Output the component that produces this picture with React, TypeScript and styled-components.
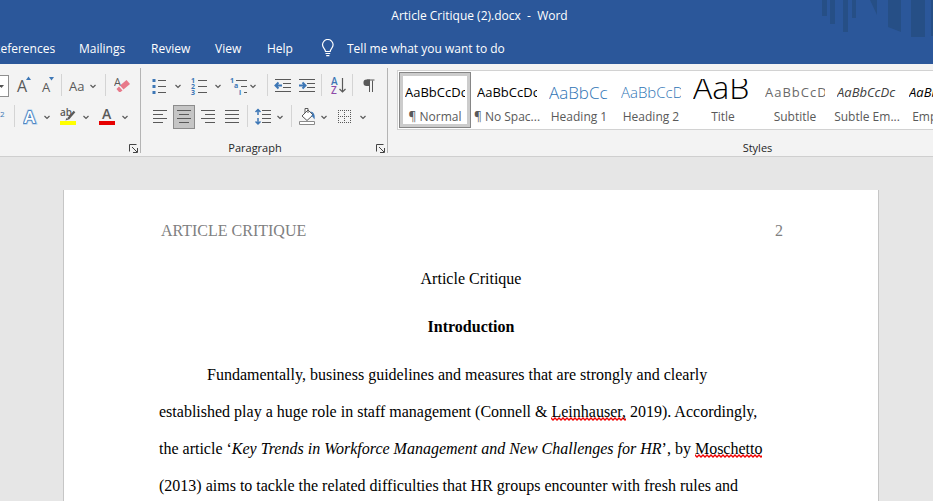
import React from 'react';
import styled, { createGlobalStyle, css } from 'styled-components';

const ui = `"Open Sans", "Noto Sans", sans-serif`;
const word = '#2b579a';
const ink = '#595959';
const blue = '#3d77b6';

const GlobalStyle = createGlobalStyle`
  * { box-sizing: border-box; }
  html, body, #root { height: 100%; }
  body { margin: 0; overflow: hidden; font-family: ${ui}; font-size: 12px; }
  button { font: inherit; color: inherit; background: none; border: 0; padding: 0; margin: 0; }
  svg { display: block; }
`;

const Window = styled.div`
  display: flex;
  flex-direction: column;
  height: 100%;
  min-height: 100vh;
  overflow: hidden;
  background: #e6e6e6;
`;

const Banner = styled.header`
  position: relative;
  flex: none;
  background: ${word};
  color: #fff;
`;

const BannerArt = styled.svg`
  position: absolute;
  top: 0;
  right: 0;
`;

const DocTitle = styled.h1`
  margin: 0;
  padding-left: 26px;
  font-size: 12px;
  font-weight: 400;
  line-height: 32px;
  text-align: center;
  white-space: pre;
`;

const TabRow = styled.nav`
  display: flex;
  height: 32px;
  margin-left: -7px;
`;

const Tab = styled.button<{ $w: number }>`
  flex: none;
  width: ${(p) => p.$w}px;
  text-align: left;
  white-space: nowrap;
`;

const TellMe = styled.label`
  display: flex;
  align-items: center;
  gap: 12px;
`;

const TellMeInput = styled.input`
  width: 200px;
  padding: 0;
  border: 0;
  outline: 0;
  background: transparent;
  color: #fff;
  font: inherit;
  &::placeholder { color: #fff; opacity: 1; }
`;

const Ribbon = styled.div`
  display: flex;
  flex: none;
  height: 93px;
  padding-top: 4px;
  overflow: hidden;
  background: #f3f3f3;
  border-bottom: 1px solid #cfcfcf;
`;

const Group = styled.section<{ $w: number }>`
  display: flex;
  flex-direction: column;
  flex: none;
  width: ${(p) => p.$w}px;
  height: 85px;
  border-right: 1px solid #b4b4b4;
`;

const Tools = styled.div<{ $pad?: number }>`
  display: flex;
  flex-direction: column;
  gap: 7px;
  padding: 6px 0 0 ${(p) => p.$pad ?? 0}px;
`;

const ToolRow = styled.div`
  display: flex;
  height: 24px;
`;

const ToolButton = styled.button<{ $w: number; $on?: boolean }>`
  flex: none;
  width: ${(p) => p.$w}px;
  height: 24px;
  ${(p) => p.$on && css`
    background: #c5c5c5;
    box-shadow: inset 0 0 0 1px #8c8c8c;
  `}
`;

const Divider = styled.span`
  flex: none;
  width: 1px;
  height: 22px;
  background: #d4d4d4;
`;

const Space = styled.span<{ $w: number }>`
  flex: none;
  width: ${(p) => p.$w}px;
`;

const FontSize = styled.select`
  flex: none;
  width: 33px;
  height: 22px;
  margin: 1px 0 0 -24px;
  appearance: none;
  border: 1px solid #8f8f8f;
  border-radius: 0;
  background: #fff url("data:image/svg+xml,%3Csvg xmlns='http://www.w3.org/2000/svg' width='5' height='3'%3E%3Cpath d='M0 0h5L2.5 3z' fill='%23555'/%3E%3C/svg%3E") no-repeat right 4px center;
  font: inherit;
`;

const GroupFoot = styled.div`
  display: grid;
  grid-template-columns: 1fr 18px;
  align-items: center;
  height: 10px;
  margin-top: auto;
  color: #262626;
  font-size: 11px;
`;

const Launcher = styled.button`
  justify-self: end;
  grid-column: 2;
  width: 9px;
  height: 9px;
  margin-right: 2px;
`;

const GroupName = styled.span`
  grid-column: 1;
  line-height: 10px;
  text-align: center;
`;

const Gallery = styled.div`
  display: flex;
  flex: none;
  width: 725px;
  height: 60px;
  margin: 2px 0 0 9px;
  padding: 1px;
  background: #fff;
  border: 1px solid #d2d2d2;
`;

const StyleCard = styled.button<{ $on?: boolean }>`
  display: flex;
  flex-direction: column;
  align-items: center;
  flex: none;
  width: 72px;
  height: 56px;
  padding-top: 7px;
  color: ${ink};
  ${(p) => p.$on && css`
    box-shadow: inset 0 0 0 1px #868686, inset 0 0 0 4px #cccccc;
  `}
`;

const Preview = styled.span<{ $size: number; $color: string; $weight?: number; $italic?: boolean; $track?: number; $line?: number }>`
  display: block;
  width: 60px;
  height: 28px;
  overflow: hidden;
  text-align: left;
  white-space: nowrap;
  line-height: ${(p) => p.$line ?? 27}px;
  font-size: ${(p) => p.$size}px;
  font-weight: ${(p) => p.$weight ?? 400};
  font-style: ${(p) => (p.$italic ? 'italic' : 'normal')};
  letter-spacing: ${(p) => p.$track ?? 0}px;
  color: ${(p) => p.$color};
`;

const StyleName = styled.span`
  line-height: 20px;
  white-space: nowrap;
`;

const Workspace = styled.main`
  display: flex;
  flex: 1;
  justify-content: center;
  min-height: 0;
  padding: 33px 0 0 9px;
  overflow: hidden;
`;

const Page = styled.article`
  flex: 0 1 816px;
  min-height: 1056px;
  padding: 0 95px;
  background: #fff;
  border: solid #c6c6c6;
  border-width: 0 1px 1px;
  color: #000;
  font-family: "Liberation Serif", "Times New Roman", serif;
  font-size: 16px;
`;

const PageHeader = styled.div`
  display: flex;
  justify-content: space-between;
  padding: 32px 0 0 2px;
  line-height: 18px;
  color: #808080;
`;

const Centered = styled.h2<{ $bold?: boolean }>`
  margin: 0;
  font-size: 16px;
  font-weight: ${(p) => (p.$bold ? 700 : 400)};
  line-height: 18px;
  text-align: center;
  padding-top: 30px;
`;

const Body = styled.p`
  margin: 0;
  padding-top: 20px;
  line-height: 37px;
  text-indent: 48px;
  white-space: nowrap;
`;

const Misspelled = styled.span`
  padding-bottom: 1px;
  background: url("data:image/svg+xml,%3Csvg xmlns='http://www.w3.org/2000/svg' width='4' height='4'%3E%3Cpath d='M-1 0L2 3L5 0' fill='none' stroke='%23f00000' stroke-width='1.3'/%3E%3C/svg%3E") repeat-x left bottom;
`;

const Icon = ({ w, children }: { w: number; children: React.ReactNode }) => (
  <svg width={w} height="24" viewBox={`0 0 ${w} 24`} fill="none" stroke={ink} aria-hidden="true" fontFamily="Open Sans, sans-serif">
    {children}
  </svg>
);

const Chevron = ({ label }: { label: string }) => (
  <ToolButton $w={8} aria-label={label}>
    <Icon w={8}><path d="M1.5 11l2.500 2.500L6.500 11" strokeWidth="1.200" /></Icon>
  </ToolButton>
);

const Tool = ({ w, label, on, children }: { w: number; label: string; on?: boolean; children: React.ReactNode }) => (
  <ToolButton $w={w} $on={on} aria-label={label} aria-pressed={on}>
    <Icon w={w}>{children}</Icon>
  </ToolButton>
);

const LaunchIcon = ({ label }: { label: string }) => (
  <Launcher aria-label={label}>
    <svg width="9" height="9" viewBox="0 0 9 9" fill="none" stroke="#444">
      <path d="M.5 7.500v-7h7M3 3l5 5M8.500 4v4.500H4" />
    </svg>
  </Launcher>
);

const styleCards = [
  { name: '¶ Normal', sample: 'AaBbCcDc', size: 13, color: '#000', on: true },
  { name: '¶ No Spac...', sample: 'AaBbCcDc', size: 13, color: '#000' },
  { name: 'Heading 1', sample: 'AaBbCc', size: 17, color: '#2e74b5', weight: 300 },
  { name: 'Heading 2', sample: 'AaBbCcD', size: 15, color: '#2e74b5', weight: 300 },
  { name: 'Title', sample: 'AaB', size: 32, color: '#000', weight: 300, line: 16 },
  { name: 'Subtitle', sample: 'AaBbCcD', size: 13, color: '#6a6a6a', track: 1 },
  { name: 'Subtle Em...', sample: 'AaBbCcDc', size: 13, color: '#404040', italic: true },
  { name: 'Emphasis', sample: 'AaBbCcDc', size: 13, color: '#000', italic: true },
];

const tabs: [string, number][] = [
  ['References', 86],
  ['Mailings', 72],
  ['Review', 64],
  ['View', 52],
  ['Help', 54],
];

export default function App() {
  return (
    <>
      <GlobalStyle />
      <Window>
        <Banner>
          <BannerArt width="112" height="40" viewBox="0 0 112 40" fill="#264f86" aria-hidden="true">
            <path d="M1 0h5v16H1zM9 0h5v24H9zM22 0h5v32h-5zM31 0h4v18h-4zM49 0h7v15zM67 0h13v32l-13-5zM90 0h14v37H90zM110 0h2v36h-2z" />
          </BannerArt>
          <DocTitle>Article Critique (2).docx  -  Word</DocTitle>
          <TabRow aria-label="Ribbon tabs">
            {tabs.map(([name, w]) => <Tab key={name} $w={w}>{name}</Tab>)}
            <TellMe>
              <svg width="14" height="18" viewBox="0 0 14 18" fill="none" stroke="#fff" strokeWidth="1.2" aria-hidden="true">
                <path d="M4.500 12.500C4.500 10 1.500 9 1.500 5.800a5.300 5.300 0 0 1 10.600 0C12.100 9 9.200 10 9.200 12.500zM4.500 14.500h4.700M5.200 16.700h3.200" />
              </svg>
              <TellMeInput aria-label="Tell me what you want to do" placeholder="Tell me what you want to do" />
            </TellMe>
          </TabRow>
        </Banner>

        <Ribbon>
          <Group $w={141} aria-label="Font">
            <Tools>
              <ToolRow>
                <FontSize aria-label="Font size" defaultValue="12"><option>12</option></FontSize>
                <Space $w={6} />
                <Tool w={21} label="Increase font size">
                  <text x="2" y="18" fontSize="16" fill={ink} stroke="none">A</text>
                  <path d="M11 6l2.500-3.500L16 6z" fill={blue} stroke="none" />
                </Tool>
                <Space $w={4} />
                <Tool w={20} label="Decrease font size">
                  <text x="2" y="18" fontSize="13" fill={ink} stroke="none">A</text>
                  <path d="M9 3h5l-2.500 3.500z" fill={blue} stroke="none" />
                </Tool>
                <Space $w={1} />
                <Divider />
                <Space $w={6} />
                <Tool w={21} label="Change case">
                  <text x="1" y="17" fontSize="13" fill={ink} stroke="none">Aa</text>
                </Tool>
                <Chevron label="Change case options" />
                <Space $w={8} />
                <Divider />
                <Space $w={8} />
                <Tool w={18} label="Clear all formatting">
                  <text x="0" y="12" fontSize="11" fill={ink} stroke="none">A</text>
                  <path d="M6 11.500L12.500 6l3.500 4-6.500 5.500z" fill="#e8798a" stroke="none" />
                  <path d="M5 12.500l3.500 4-2 1.500H5L2.500 15z" fill="#e8798a" stroke="none" />
                </Tool>
              </ToolRow>
              <ToolRow>
                <Tool w={14} label="Superscript">
                  <text x="0" y="12" fontSize="8" fill={blue} stroke="none">2</text>
                </Tool>
                <Divider />
                <Space $w={8} />
                <Tool w={20} label="Text effects">
                  <text x="1" y="18" fontSize="17" fontWeight="600" fill="#a9cbee" stroke="#a9cbee" strokeWidth="3">A</text>
                  <text x="1" y="18" fontSize="17" fontWeight="600" fill="#fff" stroke={blue} strokeWidth="1.500" paintOrder="stroke">A</text>
                </Tool>
                <Chevron label="Text effects options" />
                <Space $w={8} />
                <Tool w={20} label="Text highlight color">
                  <text x="1" y="11" fontSize="10" fontWeight="600" fill={ink} stroke="none">ab</text>
                  <path d="M9 14L15.500 6.500" strokeWidth="2.200" />
                  <path d="M6.500 15.500l1-2.500 2 1.500z" fill={ink} stroke="none" />
                  <path d="M1 16h16v4H1z" fill="#ff0" stroke="none" />
                </Tool>
                <Space $w={3} />
                <Chevron label="Highlight colors" />
                <Space $w={8} />
                <Tool w={20} label="Font color">
                  <text x="4" y="14" fontSize="14" fontWeight="600" fill={ink} stroke="none">A</text>
                  <path d="M1 16h16v4H1z" fill="#e60000" stroke="none" />
                </Tool>
                <Space $w={3} />
                <Chevron label="Font colors" />
              </ToolRow>
            </Tools>
            <GroupFoot><LaunchIcon label="Font settings" /></GroupFoot>
          </Group>

          <Group $w={247} aria-label="Paragraph">
            <Tools $pad={8}>
              <ToolRow>
                <Space $w={1} />
                <Tool w={24} label="Bullets">
                  <path d="M8 6.500h8M8 12.500h8M8 18.500h8" />
                  <path d="M2.500 6.500h3M2.500 12.500h3M2.500 18.500h3" stroke={blue} strokeWidth="3" />
                </Tool>
                <Chevron label="Bullet library" />
                <Space $w={8} />
                <Tool w={24} label="Numbering">
                  <path d="M8 6.500h9M8 12.500h9M8 18.500h9" />
                  <g fill={blue} stroke="none" fontSize="7" fontWeight="700">
                    <text x="1" y="9">1</text><text x="1" y="15">2</text><text x="1" y="21">3</text>
                  </g>
                </Tool>
                <Chevron label="Numbering library" />
                <Space $w={7} />
                <Tool w={20} label="Multilevel list">
                  <path d="M7 6.500h11M12 12.500h6M15 18.500h3" />
                  <g fill={blue} stroke="none" fontSize="7" fontWeight="700">
                    <text x="1" y="9">1</text><text x="5" y="14">a</text><text x="10" y="21">i</text>
                  </g>
                </Tool>
                <Chevron label="List library" />
                <Space $w={10} />
                <Divider />
                <Space $w={5} />
                <Tool w={22} label="Decrease indent">
                  <path d="M2 5.500h16M10 9.500h8M10 13.500h8M2 17.500h16" />
                  <path d="M9 11.500H3M5.500 8.500l-3 3 3 3" stroke={blue} strokeWidth="2" />
                </Tool>
                <Space $w={2} />
                <Tool w={22} label="Increase indent">
                  <path d="M2 5.500h16M10 9.500h8M10 13.500h8M2 17.500h16" />
                  <path d="M2 11.500h6M5.500 8.500l3 3-3 3" stroke={blue} strokeWidth="2" />
                </Tool>
                <Space $w={2} />
                <Divider />
                <Space $w={8} />
                <Tool w={20} label="Sort">
                  <text x="1" y="11" fontSize="10" fontWeight="600" fill={blue} stroke="none">A</text>
                  <text x="1" y="20" fontSize="10" fontWeight="600" fill="#8e4aa8" stroke="none">Z</text>
                  <path d="M12.500 4v14M9.500 15l3 3 3-3" strokeWidth="1.200" />
                </Tool>
                <Space $w={2} />
                <Divider />
                <Space $w={8} />
                <Tool w={20} label="Show formatting marks">
                  <path d="M11.500 18V6.500M8.500 18V6.500M6 6h7.500" />
                  <path d="M9 5.500H5.500a3 3.200 0 0 0 0 6.500H9z" fill={ink} stroke="none" />
                </Tool>
              </ToolRow>
              <ToolRow>
                <Tool w={24} label="Align left"><path d="M4 5.500h14M4 9.500h10M4 13.500h14M4 17.500h10" /></Tool>
                <Tool w={22} label="Center" on><path d="M4 5.500h14M6 9.500h10M4 13.500h14M6 17.500h10" /></Tool>
                <Tool w={24} label="Align right"><path d="M6 5.500h14M10 9.500h10M6 13.500h14M10 17.500h10" /></Tool>
                <Tool w={24} label="Justify"><path d="M6 5.500h14M6 9.500h14M6 13.500h14M6 17.500h14" /></Tool>
                <Space $w={4} />
                <Divider />
                <Space $w={6} />
                <Tool w={22} label="Line spacing">
                  <path d="M8 5.500h9M8 9.500h9M8 13.500h9M8 17.500h9" />
                  <path d="M4 4.500v5.500M4 13v6M1.500 7L4 4.500 6.500 7M1.500 16.500L4 19l2.500-2.500" stroke={blue} strokeWidth="1.500" />
                </Tool>
                <Chevron label="Line spacing options" />
                <Space $w={7} />
                <Divider />
                <Space $w={6} />
                <Tool w={20} label="Shading">
                  <path d="M4 11l6-6 5 5-6 5.500zM7 8V3.500h3V8" fill="#fff" />
                  <path d="M12 6.500c3.500 0 5.500 3.500 4.500 8-1-1.500-1.500-3-3.500-3.500l2-1.500z" fill={blue} stroke="none" />
                  <path d="M1.500 16.500h15v3h-15z" fill="#fff" stroke="#8a8a8a" />
                </Tool>
                <Space $w={2} />
                <Chevron label="Shading colors" />
                <Space $w={8} />
                <Tool w={20} label="Borders">
                  <path d="M2 5.500h13M2 11.500h13M2 17.500h13M2.500 5v13M8.500 5v13M14.500 5v13" strokeDasharray="1 1" />
                </Tool>
                <Space $w={3} />
                <Chevron label="Border options" />
              </ToolRow>
            </Tools>
            <GroupFoot><GroupName>Paragraph</GroupName><LaunchIcon label="Paragraph settings" /></GroupFoot>
          </Group>

          <Group $w={758} aria-label="Styles">
            <Gallery>
              {styleCards.map((s) => (
                <StyleCard key={s.name} $on={s.on}>
                  <Preview $size={s.size} $color={s.color} $weight={s.weight} $italic={s.italic} $track={s.track} $line={s.line}>{s.sample}</Preview>
                  <StyleName>{s.name}</StyleName>
                </StyleCard>
              ))}
            </Gallery>
            <GroupFoot><GroupName>Styles</GroupName><LaunchIcon label="Styles pane" /></GroupFoot>
          </Group>
        </Ribbon>

        <Workspace>
          <Page>
            <PageHeader><span>ARTICLE CRITIQUE</span><span>2</span></PageHeader>
            <Centered>Article Critique</Centered>
            <Centered $bold>Introduction</Centered>
            <Body>
              Fundamentally, business guidelines and measures that are strongly and clearly<br />
              established play a huge role in staff management (Connell &amp; <Misspelled>Leinhauser,</Misspelled> 2019). Accordingly,<br />
              the article ‘<em>Key Trends in Workforce Management and New Challenges for HR</em>’, by <Misspelled>Moschetto</Misspelled><br />
              (2013) aims to tackle the related difficulties that HR groups encounter with fresh rules and
            </Body>
          </Page>
        </Workspace>
      </Window>
    </>
  );
}
